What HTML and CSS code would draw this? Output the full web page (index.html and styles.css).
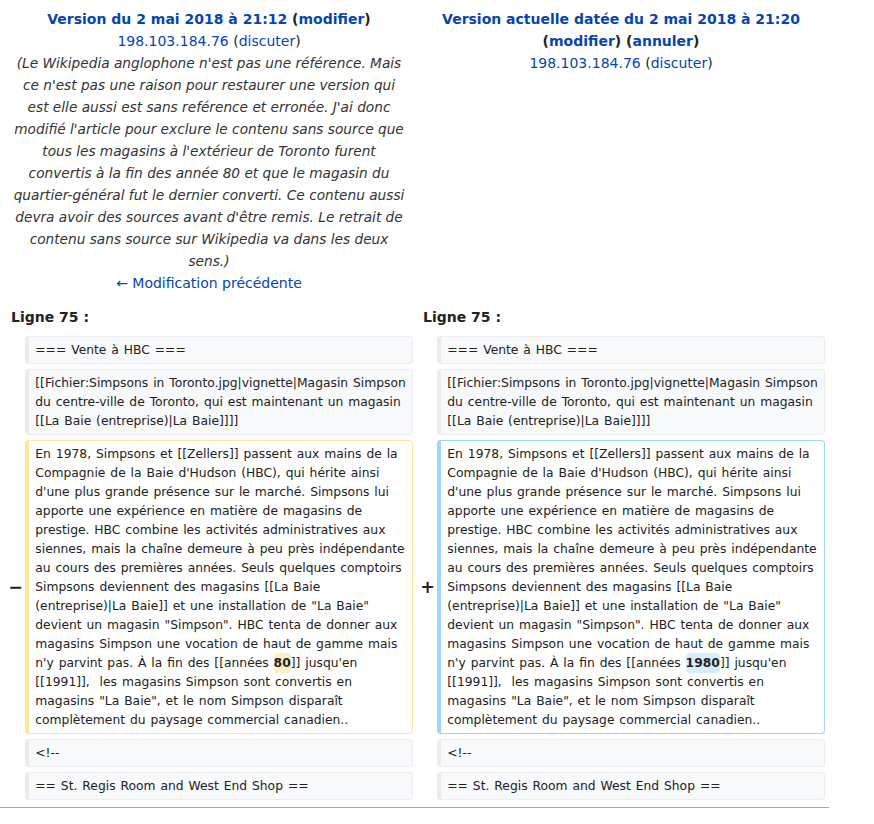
FILE: index.html
```html
<!DOCTYPE html>
<html lang="fr">
<head>
<meta charset="utf-8">
<title>Différences entre les versions</title>
<link rel="stylesheet" href="styles.css">
</head>
<body>
<div class="diff">
  <div class="title title-old">
    <div class="title-line"><a href="#">Version du 2 mai 2018 à 21:12</a> <span class="ed">(<a href="#">modifier</a>)</span></div>
    <div><a href="#">198.103.184.76</a> (<a href="#">discuter</a>)</div>
    <div class="comment">(Le Wikipedia anglophone n'est pas une référence. Mais<br>ce n'est pas une raison pour restaurer une version qui<br>est elle aussi est sans reférence et erronée. J'ai donc<br>modifié l'article pour exclure le contenu sans source que<br>tous les magasins à l'extérieur de Toronto furent<br>convertis à la fin des année 80 et que le magasin du<br>quartier-général fut le dernier converti. Ce contenu aussi<br>devra avoir des sources avant d'être remis. Le retrait de<br>contenu sans source sur Wikipedia va dans les deux<br>sens.)</div>
    <div><a href="#">← Modification précédente</a></div>
  </div>
  <div class="title title-new">
    <div class="title-line"><a href="#">Version actuelle datée du 2 mai 2018 à 21:20</a> <span class="ed">(<a href="#">modifier</a>) (<a href="#">annuler</a>)</span></div>
    <div><a href="#">198.103.184.76</a> (<a href="#">discuter</a>)</div>
  </div>

  <div class="lineno lineno-old">Ligne 75 :</div>
  <div class="lineno lineno-new">Ligne 75 :</div>

  <div class="marker"></div>
  <div class="line context">=== Vente à HBC ===</div>
  <div class="marker"></div>
  <div class="line context">=== Vente à HBC ===</div>

  <div class="marker"></div>
  <div class="line context">[[Fichier:Simpsons in Toronto.jpg|vignette|Magasin Simpson du centre-ville de Toronto, qui est maintenant un magasin [[La Baie (entreprise)|La Baie]]]]</div>
  <div class="marker"></div>
  <div class="line context">[[Fichier:Simpsons in Toronto.jpg|vignette|Magasin Simpson du centre-ville de Toronto, qui est maintenant un magasin [[La Baie (entreprise)|La Baie]]]]</div>

  <div class="marker"><span class="sign">−</span></div>
  <div class="line deleted">En 1978, Simpsons et [[Zellers]] passent aux mains de la Compagnie de la Baie d'Hudson (HBC), qui hérite ainsi d'une plus grande présence sur le marché. Simpsons lui apporte une expérience en matière de magasins de prestige. HBC combine les activités administratives aux siennes, mais la chaîne demeure à peu près indépendante au cours des premières années. Seuls quelques comptoirs Simpsons deviennent des magasins [[La Baie (entreprise)|La Baie]] et une installation de "La Baie" devient un magasin "Simpson". HBC tenta de donner aux magasins Simpson une vocation de haut de gamme mais n'y parvint pas. À la fin des [[années <span class="change">80</span>]] jusqu'en [[1991]],  les magasins Simpson sont convertis en magasins "La Baie", et le nom Simpson disparaît complètement du paysage commercial canadien..</div>
  <div class="marker"><span class="sign">+</span></div>
  <div class="line added">En 1978, Simpsons et [[Zellers]] passent aux mains de la Compagnie de la Baie d'Hudson (HBC), qui hérite ainsi d'une plus grande présence sur le marché. Simpsons lui apporte une expérience en matière de magasins de prestige. HBC combine les activités administratives aux siennes, mais la chaîne demeure à peu près indépendante au cours des premières années. Seuls quelques comptoirs Simpsons deviennent des magasins [[La Baie (entreprise)|La Baie]] et une installation de "La Baie" devient un magasin "Simpson". HBC tenta de donner aux magasins Simpson une vocation de haut de gamme mais n'y parvint pas. À la fin des [[années <span class="change">1980</span>]] jusqu'en [[1991]],  les magasins Simpson sont convertis en magasins "La Baie", et le nom Simpson disparaît complètement du paysage commercial canadien..</div>

  <div class="marker"></div>
  <div class="line context">&lt;!--</div>
  <div class="marker"></div>
  <div class="line context">&lt;!--</div>

  <div class="marker"></div>
  <div class="line context">== St. Regis Room and West End Shop ==</div>
  <div class="marker"></div>
  <div class="line context">== St. Regis Room and West End Shop ==</div>
</div>
<div class="rule"></div>
</body>
</html>
```

FILE: styles.css
```css
html, body {
  margin: 0;
  padding: 0;
  background: #ffffff;
}

body {
  font-family: "DejaVu Sans", sans-serif;
  font-size: 14px;
  color: #222222;
}

a {
  color: #0645ad;
  text-decoration: none;
}

.diff {
  display: grid;
  grid-template-columns: 16px 388px 16px 388px;
  column-gap: 4px;
  row-gap: 5px;
  padding: 4px 4px 4px 5px;
  width: 824px;
  box-sizing: border-box;
}

.title {
  text-align: center;
  line-height: 22px;
  padding: 4px 3px 0;
}

.title-old {
  grid-column: 1 / 3;
}

.title-new {
  grid-column: 3 / 5;
  padding: 4px 8px 0;
}

.title-line {
  font-weight: bold;
}

.comment {
  font-style: italic;
  font-size: 13.7px;
  color: #333333;
}

.lineno {
  font-weight: bold;
  line-height: 22px;
  padding: 7px 0 3px 6px;
}

.lineno-old {
  grid-column: 1 / 3;
}

.lineno-new {
  grid-column: 3 / 5;
}

.marker {
  display: flex;
  align-items: center;
  justify-content: flex-end;
  font-weight: bold;
  font-size: 17.5px;
  line-height: 1.2;
  color: #222222;
}

.sign {
  margin-right: -2px;
}

.line {
  font-size: 12.32px;
  line-height: 19px;
  word-spacing: 1px;
  white-space: pre-wrap;
  word-wrap: break-word;
  border-style: solid;
  border-width: 1px 1px 1px 4px;
  border-radius: 4px;
  padding: 3.5px 5px 3.5px 6.3px;
  color: #222222;
}

.context {
  background: #f8f9fa;
  border-color: #eaecf0;
}

.deleted {
  background: #ffffff;
  border-color: #ffe49c;
}

.added {
  background: #ffffff;
  border-color: #a3d3ff;
}

.change {
  font-weight: bold;
  border-radius: 4px;
  padding: 3px 0;
}

.deleted .change {
  background: #feeec8;
}

.added .change {
  background: #d8ecff;
}

.rule {
  width: 829px;
  border-top: 1px solid #a2a9b1;
  margin-top: 3px;
}
```
